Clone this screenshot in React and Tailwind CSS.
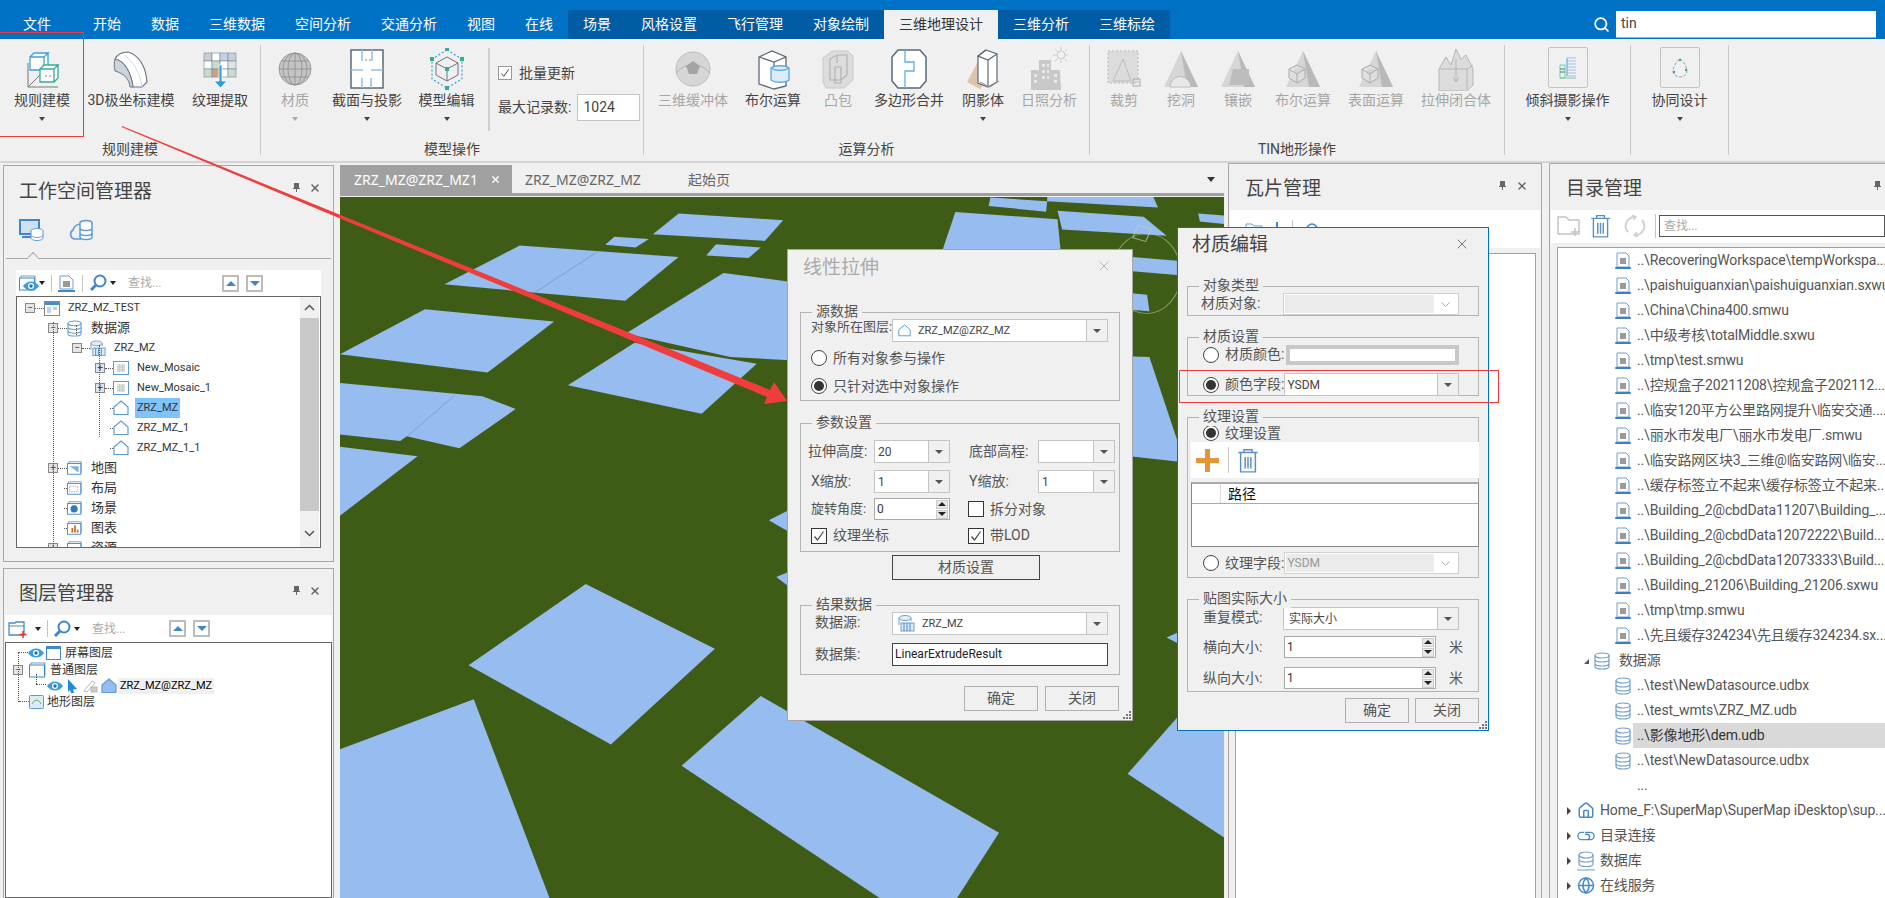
import React from "react";
import { X, Search, Home, Globe } from "lucide-react";

const Caret = ({ className = "", color = "border-t-[#444]" }) => (
  <span className={`inline-block w-0 h-0 border-l-[3px] border-r-[3px] border-t-[4px] border-l-transparent border-r-transparent ${color} ${className}`} />
);

function RuleIcon() {
  return (
    <svg width="36" height="40" viewBox="0 0 36 40" fill="none">
      <path d="M4 14v24h30" stroke="#777" strokeWidth="1" />
      <path d="M4 38l12-12" stroke="#777" strokeWidth="1" />
      <path d="M6 8h14v13H6zM6 8l4-4h14l-4 4M20 8l4-4v13l-4 4" stroke="#3ba0e0" strokeWidth="1.300" fill="#fff" />
      <path d="M16 20h14v13H16zM16 20l4-4h14l-4 4M30 20l4-4v13l-4 4" stroke="#35ad94" strokeWidth="1.300" fill="#fff" />
      <path d="M21 27h2M25 27h2" stroke="#888" />
    </svg>
  );
}
function PolarIcon() {
  return (
    <svg width="36" height="40" viewBox="0 0 36 40">
      <path d="M2 10c3-5 8-7 13-7 2 10-1 14-1 14z" fill="#e8eaee" />
      <path d="M2 10C12 12 18 24 20 38h9l5-5C33 18 26 6 15 3 9 3 4 6 2 10z" fill="#fff" stroke="#6d7784" strokeWidth="1.200" />
      <path d="M2 10c-1 3-1 7 0 12 10 3 14 8 15 16h3C18 24 12 12 2 10z" fill="#ccd3dc" stroke="#6d7784" strokeWidth="1" />
      <path d="M29 38c-2-14-8-24-17-32" fill="none" stroke="#d6dae0" />
    </svg>
  );
}
function TextureIcon() {
  const cells = ["#c9ced4", "#fff", "#bed3ee", "#c9ced4", "#fff", "#c6dccf", "#fff", "#dfe4ea", "#c6dccf", "#c9a584", "#fff", "#c6dccf"];
  return (
    <svg width="34" height="40" viewBox="0 0 34 40">
      {cells.map((c, i) => (
        <rect key={i} x={1 + (i % 4) * 8} y={4 + Math.floor(i / 4) * 8} width="8" height="8" fill={c} stroke="#7a8794" strokeWidth=".6" />
      ))}
      <path d="M16 16h3v16h5l-6.500 7-6.500-7h5z" fill="#2f9de0" stroke="#fff" strokeWidth=".8" />
    </svg>
  );
}
function GlobeIcon() {
  return (
    <svg width="34" height="40" viewBox="0 0 34 40" fill="none" stroke="#8e8e8e" strokeWidth=".8">
      <circle cx="17" cy="20" r="16" fill="#c4c4c4" />
      <ellipse cx="17" cy="20" rx="7" ry="16" />
      <ellipse cx="17" cy="20" rx="12" ry="16" />
      <path d="M1 20h32M3 12h28M3 28h28M17 4v32" />
    </svg>
  );
}
function SectionIcon() {
  return (
    <svg width="34" height="40" viewBox="0 0 34 40">
      <rect x="1" y="1" width="32" height="38" fill="#fff" stroke="#5c6a78" strokeWidth="1.500" />
      <path d="M12 1v11M22 1v11M1 21h12M21 21h12M12 29v10M21 29v10" stroke="#8fc0ea" strokeWidth="1.500" />
      <path d="M15 11h2M19 11h2" stroke="#888" />
    </svg>
  );
}
function ModelEditIcon() {
  return (
    <svg width="34" height="42" viewBox="0 0 34 42" fill="none">
      <path d="M17 2l15 9v20l-15 9-15-9V11z" stroke="#3f9ddb" strokeWidth="1.200" strokeDasharray="2 2" />
      <path d="M17 9l11 6v12l-11 6-11-6V15zM6 15l11 6 11-6M17 21v12" stroke="#6a7480" strokeWidth="1" />
      <rect x="15" y="19" width="4" height="4" fill="#35ad94" />
      <rect x="15" y="0" width="4" height="3" fill="#35ad94" />
      <rect x="30" y="9" width="4" height="4" fill="#35ad94" />
      <rect x="15" y="38" width="4" height="4" fill="#35ad94" />
      <rect x="0" y="9" width="4" height="4" fill="#35ad94" />
    </svg>
  );
}
function BufferIcon() {
  return (
    <svg width="36" height="40" viewBox="0 0 36 40">
      <circle cx="18" cy="20" r="17" fill="#d6d6d6" stroke="#bdbdbd" />
      <path d="M1 24c6-6 10-8 17-8s11 2 17 8" fill="none" stroke="#b0b0b0" />
      <path d="M18 12l7 5-3 8h-8l-3-8z" fill="#a4a4a4" />
    </svg>
  );
}
function BoolIcon() {
  return (
    <svg width="34" height="42" viewBox="0 0 34 42" fill="none">
      <path d="M3 9l13-6 14 6v29l-12 3-15-5z" fill="#fff" stroke="#5c6a78" strokeWidth="1.300" />
      <path d="M3 9l15 5 12-5M18 14v5" stroke="#5c6a78" strokeWidth="1.300" />
      <path d="M15 20c4-3 14-3 18 0v12c-4 3-14 3-18 0z" fill="#dcecf9" stroke="#58a8e4" strokeWidth="1.300" />
      <path d="M15 20c4 3 14 3 18 0" stroke="#58a8e4" strokeWidth="1.300" />
    </svg>
  );
}
function HullIcon() {
  return (
    <svg width="32" height="40" viewBox="0 0 32 40" fill="none">
      <path d="M10 2h16l5 5v24l-9 8H4l-3-6V9z" fill="#dcdcdc" stroke="#c8c8c8" />
      <path d="M8 10l7-4h10v20l-6 5H8z M13 18h6v16h-6z M15 6v8" stroke="#b2b2b2" strokeWidth="1.200" />
    </svg>
  );
}
function MergeIcon() {
  return (
    <svg width="36" height="42" viewBox="0 0 36 42">
      <path d="M7 2h22l6 7v24l-6 7H7l-6-7V9z" fill="#fff" stroke="#57697c" strokeWidth="1.500" />
      <path d="M14 2v12h9v9h-9v17" fill="none" stroke="#64aee6" strokeWidth="1.300" />
    </svg>
  );
}
function ShadowIcon() {
  return (
    <svg width="34" height="42" viewBox="0 0 34 42" fill="none">
      <path d="M14 10L1 34l13 7 8-8z" fill="#dcc5ab" />
      <path d="M20 2l11 4v28l-9 5-10-4V8z" fill="#fff" stroke="#5c6a78" strokeWidth="1.200" />
      <path d="M20 2l-8 6 10 4 9-6M22 12v26" stroke="#5c6a78" strokeWidth="1.200" />
      <path d="M14 34l10 5 9-6" stroke="#8a929b" />
    </svg>
  );
}
function SunIcon() {
  return (
    <svg width="38" height="46" viewBox="0 0 38 46" fill="none">
      <circle cx="31" cy="9" r="4" stroke="#c8c8c8" />
      <path d="M31 1v3M31 14v3M23 9h3M36 9h2M25 3l2 2M35 13l2 2M25 15l2-2M35 5l2-2" stroke="#c8c8c8" />
      <path d="M1 44V24h8V14h12v10h9l1 20z" fill="#c8c8c8" />
      <path d="M12 18h3v3h-3zM17 18h2v3h-2zM12 24h3v3h-3zM17 24h2v3h-2zM12 30h3v3h-3zM17 30h2v3h-2zM24 28h3v3h-3zM4 28h3v3H4zM4 34h3v3H4zM24 34h3v3h-3z" fill="#e8e8e8" />
    </svg>
  );
}
function ClipIcon() {
  return (
    <svg width="34" height="40" viewBox="0 0 34 40" fill="none">
      <rect x="1" y="2" width="30" height="32" fill="#dcdcdc" stroke="#b8b8b8" strokeDasharray="2 2" />
      <path d="M16 10L6 32h18z" stroke="#bcbcbc" />
      <rect x="26" y="30" width="7" height="7" stroke="#aaa" />
    </svg>
  );
}
function TinIcon({ kind }) {
  return (
    <svg width="36" height="40" viewBox="0 0 36 40" fill="none">
      <path d="M18 2L1 38h34z" fill="#d6d6d6" />
      <path d="M18 2l17 36H24z" fill="#b9b9b9" />
      {kind === "hole" && <path d="M7 38c1-14 19-14 21 0z" fill="#e8e8e8" stroke="#bcbcbc" />}
      {kind === "cube" && <path d="M4 20l8-4 8 4v9l-8 5-8-5zM4 20l8 5 8-5M12 25v9" fill="#dedede" stroke="#ababab" />}
      {kind === "mosaic" && <path d="M13 20h16v16H9z" fill="#bdbdbd" />}
    </svg>
  );
}
function ExtrudeIcon() {
  return (
    <svg width="36" height="44" viewBox="0 0 36 44" fill="none" stroke="#b5b5b5">
      <path d="M1 22l7-12 5 8 5-16 5 10 5-4 7 14v16l-6 6H1z" fill="#dcdcdc" />
      <path d="M1 22h28l6-4M29 22v20M18 12v22M15 30l3 5 3-5" />
    </svg>
  );
}
function ObliqueIcon() {
  return (
    <svg width="18" height="22" viewBox="0 0 18 22" fill="none">
      <path d="M1 8h5v13H1zM1 21h16" stroke="#7fc5ae" />
      <path d="M8 1h9M8 4h9M8 7h9M8 10h9M8 13h9M8 16h9M8 19h9" stroke="#9fc4e6" />
      <path d="M8 1v18" stroke="#5aa1dc" />
      <path d="M1 12h5M1 15h5" stroke="#2a8d6f" />
    </svg>
  );
}
function CoopIcon() {
  return (
    <svg width="18" height="20" viewBox="0 0 18 20" fill="none">
      <path d="M9 1c4 2 7 9 7 12a7 6 0 0 1-14 0C2 10 5 3 9 1z" stroke="#8fa0ae" strokeDasharray="3 1.500" />
      <circle cx="9" cy="2" r="1.200" fill="#35ad94" />
      <circle cx="15" cy="12" r="1.200" fill="#35ad94" />
      <circle cx="3" cy="14" r="1.200" fill="#4a8ac9" />
    </svg>
  );
}

// blue small icons used all over the trees and toolbars
function PolyIcon({ size = 16, fill = "none" }) {
  return (
    <svg width={size} height={size} viewBox="0 0 16 16">
      <path d="M1 14.500V7l7-6 7 6v7.500z" fill={fill} stroke="#5d9bd6" strokeWidth="1.200" />
    </svg>
  );
}
function DsIcon({ size = 16 }) {
  return (
    <svg width={size} height={size + 2} viewBox="0 0 16 18" fill="none" stroke="#6f9fcc" strokeWidth="1.200">
      <ellipse cx="8" cy="3.500" rx="7" ry="2.500" />
      <path d="M1 3.500v11c0 1.500 3 2.500 7 2.500s7-1 7-2.500v-11M1 7.500c0 1.500 3 2.500 7 2.500s7-1 7-2.500M1 11.500c0 1.500 3 2.500 7 2.500s7-1 7-2.500" />
    </svg>
  );
}
function DsetIcon() {
  return (
    <svg width="17" height="17" viewBox="0 0 17 17" fill="none" stroke="#6f9fcc">
      <ellipse cx="7" cy="3" rx="6" ry="2.500" fill="#e5eef7" />
      <path d="M1 3v7M13 3v3" />
      <rect x="3" y="8" width="13" height="8" fill="#dcebf8" />
      <path d="M6 8v8M9 8v8M12 8v8" stroke="#4a8ac9" />
    </svg>
  );
}
function GridIcon() {
  return (
    <svg width="16" height="14" viewBox="0 0 16 14">
      <rect x=".5" y=".5" width="15" height="13" fill="#fff" stroke="#5d9bd6" />
      <rect x="4" y="3" width="8" height="8" fill="#e8e4c8" />
      <path d="M6.500 3v8M9.500 3v8M4 6h8M4 9h8" stroke="#b4cfe8" />
    </svg>
  );
}
function WinIcon({ children }) {
  return (
    <svg width="18" height="16" viewBox="0 0 18 16" fill="none">
      <rect x="2" y="1" width="14" height="12" stroke="#6f9fcc" />
      <rect x=".5" y="3" width="15" height="12" fill="#fff" stroke="#3f87c8" />
      {children}
    </svg>
  );
}
function FileIcon() {
  return (
    <svg width="18" height="18" viewBox="0 0 18 18">
      <path d="M3 1h9l3 3v11H3z" fill="#fff" stroke="#6f9fcc" />
      <rect x="6" y="6" width="6" height="6" fill="#9a9a9a" />
      <rect x="1" y="15" width="16" height="2" rx="1" fill="#3f7fbe" />
    </svg>
  );
}
function Magnifier() {
  return (
    <svg width="18" height="18" viewBox="0 0 18 18" fill="none" stroke="#3f87c8" strokeWidth="2">
      <circle cx="11" cy="7" r="5.500" />
      <path d="M7 11l-5 5" strokeWidth="3" />
    </svg>
  );
}
function EyeIcon() {
  return (
    <svg width="16" height="10" viewBox="0 0 16 10">
      <path d="M0 5c4-6 12-6 16 0-4 6-12 6-16 0z" fill="#3b9be0" />
      <circle cx="8" cy="5" r="3" fill="#fff" />
      <circle cx="8" cy="5" r="1.700" fill="#1f6fb4" />
    </svg>
  );
}
function TrashIcon({ w = 19, h = 22, color = "#5b8fc4" }) {
  return (
    <svg width={w} height={h} viewBox="0 0 19 22" fill="none" stroke={color} strokeWidth="1.300">
      <path d="M1 4h17M6 4V1.500h7V4M3 4v17h13V4M7 8v10M9.500 8v10M12 8v10" />
    </svg>
  );
}
function PinIcon({ className }) {
  return (
    <svg className={className} width="7" height="9" viewBox="0 0 7 9" fill="#666">
      <path d="M1 0h5v5h1v1H4v3H3V6H0V5h1z" />
    </svg>
  );
}
function UpDown() {
  return (
    <>
      <span className="flex items-center justify-center w-[17px] h-[17px] border-2 border-[#bcbcbc]">
        <span className="w-0 h-0 border-l-[5px] border-r-[5px] border-b-[5px] border-l-transparent border-r-transparent border-b-[#3f87c8]" />
      </span>
      <span className="flex items-center justify-center w-[17px] h-[17px] border-2 border-[#bcbcbc] ml-[7px]">
        <span className="w-0 h-0 border-l-[5px] border-r-[5px] border-t-[5px] border-l-transparent border-r-transparent border-t-[#3f87c8]" />
      </span>
    </>
  );
}

function TopBar() {
  const tab = "flex items-center justify-center h-[29px] px-[15px] text-[14px] text-white";
  return (
    <div className="flex items-end justify-between h-[39px] bg-[#0072c6]">
      <div className="flex">
        <div className="flex items-center h-[29px] w-[78px] pl-[23px] text-[14px] text-white">文件</div>
        {["开始", "数据", "三维数据", "空间分析", "交通分析", "视图", "在线"].map((t) => (
          <div key={t} className={tab}>{t}</div>
        ))}
        <div className="flex bg-[#005ca3]">
          {["场景", "风格设置", "飞行管理", "对象绘制"].map((t) => (
            <div key={t} className={tab}>{t}</div>
          ))}
          <div className="flex items-center justify-center h-[29px] px-[15px] text-[14px] text-[#333] bg-[#f0f0f0]">三维地理设计</div>
          {["三维分析", "三维标绘"].map((t) => (
            <div key={t} className={tab}>{t}</div>
          ))}
        </div>
      </div>
      <div className="flex items-center mb-[1px] mr-[9px]">
        <Search size={17} color="#fff" strokeWidth={2.500} className="mr-[6px]" />
        <div className="w-[260px] h-[27px] bg-white border-b border-[#aaa] pl-[5px] text-[14px] leading-[25px] text-[#444]">tin</div>
      </div>
    </div>
  );
}

function Tool({ w, icon, label, caret, off }) {
  return (
    <div className="flex flex-col items-center shrink-0" style={{ width: w }}>
      <div className="flex items-center justify-center h-[42px]">{icon}</div>
      <div className={`h-[20px] leading-[20px] text-[14px] whitespace-nowrap ${off ? "text-[#a6a6a6]" : "text-[#444]"}`}>{label}</div>
      {caret && <Caret className="mt-[7px]" color={off ? "border-t-[#aaa]" : "border-t-[#444]"} />}
    </div>
  );
}
function BoxTool({ w, icon, label }) {
  return (
    <div className="flex flex-col items-center shrink-0" style={{ width: w }}>
      <div className="flex items-center justify-center w-[40px] h-[41px] mt-[-1px] mb-[2px] border border-[#c4c4c4] rounded-[2px]">{icon}</div>
      <div className="h-[20px] leading-[20px] text-[14px] whitespace-nowrap text-[#444]">{label}</div>
      <Caret className="mt-[7px]" />
    </div>
  );
}
function RibbonGroup({ width, label, children }) {
  return (
    <div className="flex flex-col h-[110px] my-[6px] pt-[3px] border-r border-[#c8c8c8] shrink-0" style={{ width }}>
      <div className="flex flex-1">{children}</div>
      <div className="h-[20px] leading-[20px] text-center text-[14px] text-[#444] mb-[-4px]">{label}</div>
    </div>
  );
}

function Ribbon() {
  return (
    <div className="flex h-[124px] bg-[#f0f0f0] border-b-2 border-[#d4d4d4]">
      <RibbonGroup width={261} label="规则建模">
        <Tool w={84} icon={<RuleIcon />} label="规则建模" caret />
        <Tool w={94} icon={<PolarIcon />} label="3D极坐标建模" />
        <Tool w={84} icon={<TextureIcon />} label="纹理提取" />
      </RibbonGroup>
      <RibbonGroup width={383} label="模型操作">
        <Tool w={68} icon={<GlobeIcon />} label="材质" caret off />
        <Tool w={76} icon={<SectionIcon />} label="截面与投影" caret />
        <Tool w={83} icon={<ModelEditIcon />} label="模型编辑" caret />
        <div className="w-[155px] h-[83px] border-l-2 border-[#d0d0d0] pl-[8px] pt-[15px] text-[14px] text-[#444]">
          <div className="flex items-center h-[20px] gap-[7px]">
            <Check checked size={14} light />
            <span>批量更新</span>
          </div>
          <div className="flex items-center mt-[11px] w-[146px]">
            <span className="whitespace-nowrap">最大记录数:</span>
            <div className="w-[63px] h-[27px] ml-[6px] bg-white border border-[#c4c4c4] pl-[5px] leading-[25px]">1024</div>
          </div>
        </div>
      </RibbonGroup>
      <RibbonGroup width={446} label="运算分析">
        <Tool w={98} icon={<BufferIcon />} label="三维缓冲体" off />
        <Tool w={62} icon={<BoolIcon />} label="布尔运算" />
        <Tool w={68} icon={<HullIcon />} label="凸包" off />
        <Tool w={74} icon={<MergeIcon />} label="多边形合并" />
        <Tool w={74} icon={<ShadowIcon />} label="阴影体" caret />
        <Tool w={58} icon={<SunIcon />} label="日照分析" off />
      </RibbonGroup>
      <RibbonGroup width={415} label="TIN地形操作">
        <Tool w={68} icon={<ClipIcon />} label="裁剪" off />
        <Tool w={46} icon={<TinIcon kind="hole" />} label="挖洞" off />
        <Tool w={68} icon={<TinIcon kind="mosaic" />} label="镶嵌" off />
        <Tool w={62} icon={<TinIcon kind="cube" />} label="布尔运算" off />
        <Tool w={84} icon={<TinIcon kind="cube" />} label="表面运算" off />
        <Tool w={76} icon={<ExtrudeIcon />} label="拉伸闭合体" off />
      </RibbonGroup>
      <RibbonGroup width={126} label="">
        <BoxTool w={125} icon={<ObliqueIcon />} label="倾斜摄影操作" />
      </RibbonGroup>
      <RibbonGroup width={98} label="">
        <BoxTool w={97} icon={<CoopIcon />} label="协同设计" />
      </RibbonGroup>
    </div>
  );
}

function PanelHead({ title, h = "h-[44px] pt-[8px]" }) {
  return (
    <div className={`relative flex items-center ${h} pl-[14px] shrink-0`}>
      <span className="text-[19px] text-[#444] whitespace-nowrap">{title}</span>
      <PinIcon className="absolute left-[288px] top-[17px]" />
      <X size={12} className="absolute left-[304px] top-[16px]" color="#666" strokeWidth={3} />
    </div>
  );
}
function Box({ sign }) {
  return (
    <span className="flex items-center justify-center w-[10px] h-[10px] bg-[#e4e4e4] border border-[#888] text-[#1f4e8c] text-[10px] leading-none shrink-0">
      {sign}
    </span>
  );
}
function Dots({ w }) {
  return <span className="border-t border-dotted border-[#555] shrink-0" style={{ width: w }} />;
}

function WsRow({ left, box, icon, text, cjk, selected, dot = 9 }) {
  return (
    <div className="flex items-center h-[20px]" style={{ paddingLeft: left }}>
      {box ? <Box sign={box} /> : <span className="w-[10px] shrink-0" />}
      <Dots w={dot} />
      <span className="flex items-center w-[16px] shrink-0">{icon}</span>
      <span className={`ml-[6px] px-[2px] h-[20px] leading-[20px] text-[#333] whitespace-nowrap ${cjk ? "text-[13px]" : "text-[11px]"} ${selected ? "bg-[#7ec4fa]" : ""}`}>{text}</span>
    </div>
  );
}

function WorkspacePanel() {
  return (
    <div className="flex flex-col h-[397px] border border-[#a8a8a8] px-[1px]">
      <PanelHead title="工作空间管理器" />
      <div className="relative flex items-center gap-[24px] h-[49px] mx-[1px] pl-[13px] pb-[8px] border-b border-[#a8a8a8]">
        <svg width="25" height="22" viewBox="0 0 25 22" fill="none">
          <rect x="1" y="1" width="19" height="14" fill="#cfe2f4" stroke="#3f87c8" strokeWidth="2" />
          <path d="M3 18h12" stroke="#3f87c8" strokeWidth="2" />
          <ellipse cx="18" cy="12" rx="6" ry="2.500" fill="#fff" stroke="#5d9bd6" />
          <path d="M12 12v7c0 1.500 3 2.500 6 2.500s6-1 6-2.500v-7M12 16c0 1.500 3 2.500 6 2.500s6-1 6-2.500" fill="#fff" stroke="#5d9bd6" />
        </svg>
        <svg width="25" height="22" viewBox="0 0 25 22" fill="none" stroke="#5d9bd6" strokeWidth="1.500">
          <path d="M6 20a5 5 0 0 1-1-9c1-4 5-6 9-6M13 20H6" />
          <ellipse cx="18" cy="4" rx="6" ry="2.500" />
          <path d="M12 4v14c0 1.500 3 2.500 6 2.500s6-1 6-2.500V4M12 9c0 1.500 3 2.500 6 2.500s6-1 6-2.500M12 14c0 1.500 3 2.500 6 2.500s6-1 6-2.500" fill="#fff" />
        </svg>
        <span className="absolute left-[22px] bottom-[-1px] w-[10px] h-[7px] overflow-hidden">
          <span className="block w-[10px] h-[10px] mt-[2px] rotate-45 bg-[#f0f0f0] border-l border-t border-[#a8a8a8]" />
        </span>
      </div>
      <div className="flex items-center h-[26px] mt-[11px] mx-[11px] bg-white pl-[3px]">
        <span className="relative w-[26px] flex">
          <WinIcon />
          <span className="absolute left-[4px] top-[6px]"><EyeIcon /></span>
        </span>
        <Caret className="ml-[-6px]" color="border-t-[#222]" />
        <span className="w-px h-[17px] bg-[#c4c4c4] ml-[6px]" />
        <span className="ml-[6px]">
          <svg width="17" height="17" viewBox="0 0 17 17"><path d="M2 1h9l4 4v9H2z" fill="#fff" stroke="#6f9fcc" /><rect x="5" y="6" width="7" height="6" fill="#999" /><rect x="0" y="15" width="17" height="2" fill="#3f87c8" /></svg>
        </span>
        <span className="w-px h-[17px] bg-[#c4c4c4] ml-[7px]" />
        <span className="ml-[6px] flex"><Magnifier /></span>
        <Caret className="ml-[3px]" color="border-t-[#222]" />
        <span className="ml-[12px] w-[94px] text-[12px] text-[#aaa]">查找...</span>
        <UpDown />
      </div>
      <div className="relative flex h-[252px] mx-[11px] bg-white border border-[#666] overflow-hidden">
        <div className="relative flex-1 pt-[1px] overflow-hidden">
          <span className="absolute left-[36px] top-[25px] h-[230px] border-l border-dotted border-[#555]" />
          <span className="absolute left-[59px] top-[28px] h-[10px] border-l border-dotted border-[#555]" />
          <span className="absolute left-[82px] top-[48px] h-[92px] border-l border-dotted border-[#555]" />
          <WsRow left={8} box="−" icon={<svg width="16" height="15" viewBox="0 0 16 15"><rect x=".5" y=".5" width="15" height="14" fill="#fff" stroke="#888" /><rect x="1" y="1" width="14" height="3" fill="#4a8ac9" /><rect x="3" y="6" width="4" height="6" fill="#bcd3e8" /><rect x="9" y="6" width="4" height="3" fill="#bcd3e8" /></svg>} text="ZRZ_MZ_TEST" />
          <WsRow left={31} box="−" icon={<DsIcon size={15} />} text="数据源" cjk />
          <WsRow left={55} box="−" dot={8} icon={<DsetIcon />} text="ZRZ_MZ" />
          <WsRow left={78} box="+" dot={8} icon={<GridIcon />} text="New_Mosaic" />
          <WsRow left={78} box="+" dot={8} icon={<GridIcon />} text="New_Mosaic_1" />
          <WsRow left={83} dot={3} icon={<PolyIcon />} text="ZRZ_MZ" selected />
          <WsRow left={83} dot={3} icon={<PolyIcon />} text="ZRZ_MZ_1" />
          <WsRow left={83} dot={3} icon={<PolyIcon />} text="ZRZ_MZ_1_1" />
          <WsRow left={31} box="+" icon={<WinIcon><path d="M3 6l10 7V6z" fill="#7ab0e0" /></WinIcon>} text="地图" cjk />
          <WsRow left={37} dot={3} icon={<WinIcon><rect x="3" y="6" width="9" height="6" stroke="#999" strokeDasharray="1 1" /></WinIcon>} text="布局" cjk />
          <WsRow left={37} dot={3} icon={<WinIcon><circle cx="8" cy="9" r="4" fill="#2b78c2" /></WinIcon>} text="场景" cjk />
          <WsRow left={37} dot={3} icon={<WinIcon><path d="M5 13V8h2v5zM8 13V5h2v8zM11 13v-3h2v3z" fill="#c8722c" /></WinIcon>} text="图表" cjk />
          <WsRow left={31} box="+" icon={<WinIcon />} text="资源" cjk />
        </div>
        <div className="flex flex-col items-center w-[19px] bg-[#f0f0f0] mr-[1px] text-[#444]">
          <svg className="mt-[7px]" width="11" height="7" viewBox="0 0 11 7" fill="none" stroke="#555" strokeWidth="1.500"><path d="M1 6l4.500-4.500L10 6" /></svg>
          <div className="w-full h-[193px] mt-[7px] bg-[#c8c8c8]" />
          <svg className="mt-[19px]" width="11" height="7" viewBox="0 0 11 7" fill="none" stroke="#555" strokeWidth="1.500"><path d="M1 1l4.500 4.500L10 1" /></svg>
        </div>
      </div>
    </div>
  );
}

function LayerPanel() {
  return (
    <div className="flex flex-col flex-1 border border-b-0 border-[#a8a8a8] px-[1px] overflow-hidden">
      <PanelHead title="图层管理器" h="h-[46px] pt-[5px]" />
      <div className="flex items-center h-[27px] bg-white pl-[3px]">
        <svg width="20" height="18" viewBox="0 0 20 18" fill="none">
          <path d="M1 15V3h6l1-1h8v13z" fill="#fff" stroke="#4a8ac9" strokeWidth="1.300" />
          <path d="M1 6h15" stroke="#4a8ac9" />
          <path d="M15 11v7M11.500 14.500h7" stroke="#e0352b" strokeWidth="1.500" />
        </svg>
        <Caret className="ml-[7px]" color="border-t-[#222]" />
        <span className="w-px h-[17px] bg-[#c4c4c4] ml-[6px]" />
        <span className="ml-[5px] flex"><Magnifier /></span>
        <Caret className="ml-[3px]" color="border-t-[#222]" />
        <span className="ml-[12px] w-[77px] text-[12px] text-[#aaa]">查找...</span>
        <UpDown />
      </div>
      <div className="relative flex-1 bg-white border border-[#666] text-[12px] text-[#333]">
        <span className="absolute left-[12px] top-[9px] h-[50px] border-l border-dotted border-[#555]" />
        <div className="flex items-center h-[17px] mt-[1px] pl-[13px]">
          <Dots w={9} />
          <EyeIcon />
          <span className="ml-[2px] flex"><svg width="15" height="14" viewBox="0 0 15 14"><rect x=".5" y=".5" width="14" height="13" fill="#fff" stroke="#3f87c8" /><rect x="1" y="1" width="13" height="2" fill="#3f87c8" /></svg></span>
          <span className="ml-[4px]">屏幕图层</span>
        </div>
        <div className="flex items-center h-[17px] pl-[7px]">
          <Box sign="−" />
          <span className="ml-[6px] flex"><WinIcon /></span>
          <span className="ml-[3px]">普通图层</span>
        </div>
        <div className="relative flex items-center h-[15px] pl-[41px]">
          <span className="absolute left-[30px] top-[-4px] h-[10px] border-l border-dotted border-[#555]" />
          <span className="absolute left-[30px] top-[6px] w-[10px] border-t border-dotted border-[#555]" />
          <EyeIcon />
          <svg className="ml-[3px]" width="13" height="14" viewBox="0 0 13 14"><path d="M2 0l9 10-4 .5 1 3.500-3 0-1-3-2 2z" fill="#1f8ade" /></svg>
          <svg className="ml-[4px]" width="15" height="14" viewBox="0 0 15 14" fill="none" stroke="#b8b8b8"><path d="M1 12L9 2l3 2-8 9z" /><rect x="8" y="8" width="6" height="5" fill="#c8c8c8" /></svg>
          <span className="ml-[3px] flex"><PolyIcon size={16} fill="#97bcf0" /></span>
          <span className="ml-[1px] px-[2px] bg-[#f0f0f0] text-black text-[11px] leading-[16px]">ZRZ_MZ@ZRZ_MZ</span>
        </div>
        <div className="flex items-center h-[17px] pl-[13px]">
          <Dots w={10} />
          <span className="flex"><svg width="15" height="14" viewBox="0 0 15 14"><rect x=".5" y=".5" width="14" height="13" rx="1" fill="#dcebf8" stroke="#5d9bd6" /><path d="M3 9c2-5 7-5 9 0" fill="none" stroke="#6da85c" /></svg></span>
          <span className="ml-[3px]">地形图层</span>
        </div>
      </div>
    </div>
  );
}

function SceneMap() {
  const blocks = [
    "590,118 772,132 740,176 545,162",
    "478,167 538,172 515,190 462,184",
    "655,183 733,190 712,212 638,207",
    "313,186 590,210 497,303 182,268",
    "148,321 373,347 257,455 0,416",
    "668,244 800,265 800,430 680,422 498,372",
    "513,392 726,436 630,542 397,482",
    "0,477 248,505 306,532 208,615 116,590 105,600 0,586",
    "0,612 135,632 0,758",
    "428,903 653,1040 472,1243 224,1075",
    "233,1147 365,1568 0,1568 0,1253",
    "733,1140 1148,1430 1075,1568 940,1568 595,1288",
    "1072,115 1250,130 1258,230 1040,230",
    "1133,84 1232,92 1230,114 1130,102",
    "1232,83 1417,83 1425,105 1232,92",
    "1250,112 1400,125 1440,165 1258,152",
    "1360,208 1458,218 1458,248 1360,238",
    "1360,285 1406,290 1410,325 1360,320",
    "1360,420 1410,422 1470,640 1470,645 1360,630",
    "800,735 747,768 800,805",
    "800,868 760,888 800,925",
    "1470,1000 1440,1016 1470,1035",
    "1470,1170 1372,1305 1540,1440 1540,1170",
    "1495,118 1540,122 1540,140 1498,135",
  ];
  return (
    <svg className="block w-full h-full" viewBox="0 83 1540 1485" preserveAspectRatio="none">
      <rect x="0" y="83" width="1540" height="1485" fill="#3f5c17" />
      {blocks.map((p) => (
        <polygon key={p} points={p} fill="#97bcf0" />
      ))}
      <path d="M450 198L340 285M200 503L115 592" stroke="#6f8aa8" strokeWidth="1" />
      <ellipse cx="1405" cy="245" rx="60" ry="85" fill="none" stroke="#b9c6a6" strokeOpacity=".6" strokeWidth="2" />
      <rect x="1385" y="146" width="24" height="28" fill="none" stroke="#c8d2b8" strokeOpacity=".7" strokeWidth="2" transform="rotate(20 1397 160)" />
    </svg>
  );
}

function CenterPanel() {
  return (
    <div className="flex flex-col w-[884px] mr-[4px] shrink-0 mt-[2px]">
      <div className="flex items-center h-[28px] border-b-[3px] border-[#a0a0a0] box-content text-[14px] font-['Noto_Sans','Noto_Sans_CJK_SC',sans-serif]">
        <div className="flex items-center w-[172px] h-[28px] bg-[#a0a0a0] pl-[14px] text-white whitespace-nowrap">
          ZRZ_MZ@ZRZ_MZ1
          <X size={11} strokeWidth={3} className="ml-[12px]" />
        </div>
        <span className="ml-[13px] text-[#666] whitespace-nowrap">ZRZ_MZ@ZRZ_MZ</span>
        <span className="ml-[47px] text-[#666]">起始页</span>
        <Caret className="ml-auto mr-[9px] border-l-[4px] border-r-[4px] border-t-[5px]" color="border-t-[#333]" />
      </div>
      <div className="flex-1 min-h-0 mt-[1px]">
        <SceneMap />
      </div>
    </div>
  );
}

function TilePanel() {
  return (
    <div className="flex flex-col w-[314px] mr-[7px] shrink-0 border border-b-0 border-[#a8a8a8] px-[1px]">
      <div className="relative flex items-center h-[46px] pl-[15px] pt-[5px]">
        <span className="text-[19px] text-[#444]">瓦片管理</span>
        <PinIcon className="absolute left-[269px] top-[17px]" />
        <X size={12} className="absolute left-[286px] top-[16px]" color="#666" strokeWidth={3} />
      </div>
      <div className="flex items-center h-[38px] bg-white pl-[15px] gap-[10px]">
        <svg width="18" height="14" viewBox="0 0 18 14" fill="none" stroke="#6f9fcc"><path d="M1 13V2h6l2 2h8v9z" /></svg>
        <span className="w-[2px] h-[14px] bg-[#3f87c8] ml-[3px]" />
        <span className="w-px h-[18px] bg-[#c4c4c4] ml-[4px]" />
        <svg width="16" height="14" viewBox="0 0 16 14" fill="none" stroke="#3f87c8" strokeWidth="1.500"><circle cx="9" cy="7" r="5" /></svg>
      </div>
      <div className="flex-1 bg-white mt-[5px] ml-[5px] mr-[4px] border border-[#a0a0a0] border-b-0" />
    </div>
  );
}

function DirRow({ left, icon, text, selected, iconGap = 5, arrow }) {
  return (
    <div className="flex items-center h-[25px] whitespace-nowrap" style={{ paddingLeft: left }}>
      {arrow && <span className={`w-0 h-0 ${arrow === "open" ? "mr-[4px] border-l-[5px] border-b-[5px] border-l-transparent border-b-[#555] mt-[2px]" : "mr-[6px] border-t-[4px] border-b-[4px] border-l-[4px] border-t-transparent border-b-transparent border-l-[#444] ml-[1px]"}`} />}
      <span className="flex items-center justify-center w-[18px] shrink-0">{icon}</span>
      <span className={`flex-1 h-[25px] leading-[25px] ${selected ? "bg-[#d9d9d9] text-[#333]" : ""}`} style={{ paddingLeft: selected ? 4 : 0, marginLeft: selected ? iconGap - 4 : iconGap }}>{text}</span>
    </div>
  );
}

const FILES = [
  "..\\RecoveringWorkspace\\tempWorkspa...",
  "..\\paishuiguanxian\\paishuiguanxian.sxwu",
  "..\\China\\China400.smwu",
  "..\\中级考核\\totalMiddle.sxwu",
  "..\\tmp\\test.smwu",
  "..\\控规盒子20211208\\控规盒子202112...",
  "..\\临安120平方公里路网提升\\临安交通....",
  "..\\丽水市发电厂\\丽水市发电厂.smwu",
  "..\\临安路网区块3_三维@临安路网\\临安...",
  "..\\缓存标签立不起来\\缓存标签立不起来...",
  "..\\Building_2@cbdData11207\\Building_...",
  "..\\Building_2@cbdData12072222\\Build...",
  "..\\Building_2@cbdData12073333\\Build...",
  "..\\Building_21206\\Building_21206.sxwu",
  "..\\tmp\\tmp.smwu",
  "..\\先且缓存324234\\先且缓存324234.sx...",
];

function DirectoryPanel() {
  return (
    <div className="flex flex-col flex-1 min-w-0 border-l border-t border-[#a8a8a8] pl-[1px] overflow-hidden">
      <div className="relative flex items-center h-[46px] pl-[15px] pt-[5px]">
        <span className="text-[19px] text-[#444]">目录管理</span>
        <PinIcon className="absolute left-[323px] top-[17px]" />
      </div>
      <div className="flex items-center h-[33px] bg-white pl-[6px] pb-[1px]">
        <svg width="24" height="22" viewBox="0 0 24 22" fill="none" stroke="#c4c4c4" strokeWidth="1.500"><path d="M1 19V2h8l3 3h10v14z" /><path d="M18 13v8M14 17h8" /></svg>
        <span className="ml-[8px] flex"><TrashIcon w={23} h={24} /></span>
        <svg className="ml-[12px]" width="22" height="22" viewBox="0 0 22 22" fill="none" stroke="#d0d0d0" strokeWidth="2"><path d="M4 17A9 9 0 0 1 11 2M18 5a9 9 0 0 1-7 15" /><path d="M8 0l4 2-3 3M14 22l-4-2 3-3" strokeWidth="1.500" /></svg>
        <span className="w-px h-[24px] bg-[#c4c4c4] ml-[9px]" />
        <div className="flex-1 h-[22px] ml-[3px] border border-[#555] pl-[4px] text-[12px] leading-[20px] text-[#aaa]">查找...</div>
      </div>
      <div className="flex-1 mt-[4px] ml-[6px] bg-white border-l border-t border-[#a0a0a0] text-[14px] tracking-[-0.15px] text-[#555] overflow-hidden">
        {FILES.map((f) => (
          <DirRow key={f} left={56} icon={<FileIcon />} text={f} />
        ))}
        <DirRow left={26} arrow="open" icon={<DsIcon />} iconGap={8} text="数据源" />
        <DirRow left={56} icon={<DsIcon />} text="..\test\NewDatasource.udbx" />
        <DirRow left={56} icon={<DsIcon />} text="..\test_wmts\ZRZ_MZ.udb" />
        <DirRow left={56} icon={<DsIcon />} text="..\影像地形\dem.udb" selected />
        <DirRow left={56} icon={<DsIcon />} text="..\test\NewDatasource.udbx" />
        <DirRow left={56} icon={<span />} text="..." />
        <DirRow left={8} arrow="closed" icon={<Home size={19} color="#4a8ac9" />} text="Home_F:\SuperMap\SuperMap iDesktop\sup..." />
        <DirRow left={8} arrow="closed" icon={<svg width="20" height="16" viewBox="0 0 20 16" fill="none" stroke="#4a8ac9" strokeWidth="1.500"><path d="M8 4H5a4 4 0 0 0 0 8h6a3 3 0 0 0 0-6H9M12 12h3a4 4 0 0 0 0-8H9" /></svg>} text="目录连接" />
        <DirRow left={8} arrow="closed" icon={<svg width="18" height="20" viewBox="0 0 18 20" fill="none" stroke="#6f9fcc" strokeWidth="1.200"><ellipse cx="9" cy="4" rx="7" ry="3" /><path d="M2 4v9c0 1.500 3 2.500 7 2.500s7-1 7-2.500V4M2 8.500c0 1.500 3 2.500 7 2.500s7-1 7-2.500M0 19h18" /></svg>} text="数据库" />
        <DirRow left={8} arrow="closed" icon={<Globe size={19} color="#4a8ac9" />} text="在线服务" />
      </div>
    </div>
  );
}

function Radio({ on }) {
  return (
    <span className="flex items-center justify-center w-[16px] h-[16px] rounded-full bg-white border border-[#444] shrink-0">
      {on && <span className="w-[10px] h-[10px] rounded-full bg-[#333]" />}
    </span>
  );
}
function Check({ checked, size = 16, light }) {
  return (
    <span className={`flex items-center justify-center bg-white border shrink-0 ${light ? "border-[#999]" : "border-[#333]"}`} style={{ width: size, height: size }}>
      {checked && (
        <svg width={size - 4} height={size - 4} viewBox="0 0 12 12" fill="none" stroke="#444" strokeWidth="1.200"><path d="M1.500 6.500L4.500 10 10.500 1.500" /></svg>
      )}
    </span>
  );
}
function DropBtn({ w = 21 }) {
  return (
    <span className="flex items-center justify-center h-full border-l border-[#c4c4c4] bg-[#f0f0f0] shrink-0" style={{ width: w }}>
      <Caret className="border-l-[4px] border-r-[4px] border-t-[4px]" color="border-t-[#555]" />
    </span>
  );
}
function Combo({ className, icon, text, pl = 3, btn = 21 }) {
  return (
    <div className={`flex items-center h-[23px] bg-white border border-[#c4c4c4] text-[12px] text-[#444] ${className}`}>
      {icon && <span className="ml-[5px] mr-[7px] flex">{icon}</span>}
      <span className="flex-1 truncate" style={{ paddingLeft: pl }}>{text}</span>
      <DropBtn w={btn} />
    </div>
  );
}
function DisabledCombo({ text }) {
  return (
    <div className="flex items-center w-[176px] h-[22px] ml-auto bg-white border border-[#d0d0d0] p-[1px] text-[12px] text-[#999]">
      <span className="flex-1 h-full bg-[#ebebeb] pl-[1px] leading-[18px]">{text}</span>
      <svg className="mx-[7px]" width="9" height="5" viewBox="0 0 9 5" fill="none" stroke="#aaa"><path d="M.5.5l4 4 4-4" /></svg>
    </div>
  );
}
function Spin({ className, text }) {
  return (
    <div className={`flex items-center h-[22px] bg-white border border-[#aaa] text-[12px] text-[#333] ${className}`}>
      <span className="flex-1 pl-[2px]">{text}</span>
      <span className="flex flex-col w-[12px] mr-[1px] gap-[1px]">
        <span className="flex items-center justify-center h-[9px] bg-[#e8e8e8] border border-[#ccc]">
          <span className="w-0 h-0 border-l-[4px] border-r-[4px] border-b-[4px] border-l-transparent border-r-transparent border-b-[#222]" />
        </span>
        <span className="flex items-center justify-center h-[9px] bg-[#e8e8e8] border border-[#ccc]">
          <span className="w-0 h-0 border-l-[4px] border-r-[4px] border-t-[4px] border-l-transparent border-r-transparent border-t-[#222]" />
        </span>
      </span>
    </div>
  );
}
function Group({ legend, className = "", children }) {
  return (
    <div className={`relative border border-[#b4b4b4] ${className}`}>
      <span className="absolute -top-[12px] left-[11px] px-[4px] bg-[#f0f0f0] text-[14px] leading-[20px] text-[#555] whitespace-nowrap">{legend}</span>
      {children}
    </div>
  );
}
function Btn({ w, children, dark }) {
  return (
    <div className={`flex items-center justify-center h-[25px] text-[14px] text-[#555] border ${dark ? "border-[#444]" : "border-[#b0b0b0]"}`} style={{ width: w }}>
      {children}
    </div>
  );
}
function Grip() {
  return (
    <svg className="absolute right-0 bottom-0" width="10" height="10" viewBox="0 0 10 10" fill="#777">
      <rect x="7" y="1" width="2" height="2" /><rect x="4" y="4" width="2" height="2" /><rect x="7" y="4" width="2" height="2" />
      <rect x="1" y="7" width="2" height="2" /><rect x="4" y="7" width="2" height="2" /><rect x="7" y="7" width="2" height="2" />
    </svg>
  );
}

function ExtrudeDialog() {
  const label = "text-[14px] text-[#555] whitespace-nowrap";
  return (
    <div className="absolute left-[787px] top-[249px] w-[346px] h-[472px] bg-[#f0f0f0] border border-[#a6a6a6] px-[12px]">
      <div className="relative h-[62px] pl-[3px] pt-[4px] text-[19px] text-[#aaa]">
        线性拉伸
        <X size={16} strokeWidth={1} color="#999" className="absolute right-[8px] top-[8px]" />
      </div>
      <Group legend="源数据" className="h-[89px]">
        <div className="flex pt-[6px] pl-[10px]">
          <span className="w-[81px] -mt-[2px] text-[13px] text-[#555] whitespace-nowrap">对象所在图层:</span>
          <Combo className="w-[216px]" icon={<PolyIcon size={13} />} text={<span className="text-[11px]">ZRZ_MZ@ZRZ_MZ</span>} pl={0} />
        </div>
        <div className="flex items-center h-[28px] mt-[2px] pl-[10px] gap-[6px]">
          <Radio />
          <span className={label}>所有对象参与操作</span>
        </div>
        <div className="flex items-center h-[28px] pl-[10px] gap-[6px]">
          <Radio on />
          <span className={label}>只针对选中对象操作</span>
        </div>
      </Group>
      <Group legend="参数设置" className="h-[129px] mt-[22px]">
        <div className="flex items-center mt-[16px] pl-[7px]">
          <span className={`${label} w-[66px]`}>拉伸高度:</span>
          <Combo className="w-[76px]" text="20" />
          <span className={`${label} w-[69px] ml-[19px]`}>底部高程:</span>
          <Combo className="w-[77px]" text="" />
        </div>
        <div className="flex items-center mt-[7px] pl-[7px]">
          <span className={`${label} w-[66px] pl-[3px]`}>X缩放:</span>
          <Combo className="w-[76px]" text="1" />
          <span className={`${label} w-[69px] ml-[19px]`}>Y缩放:</span>
          <Combo className="w-[77px]" text="1" />
        </div>
        <div className="flex items-center mt-[5px] pl-[7px]">
          <span className="w-[66px] pl-[3px] text-[13px] text-[#555] whitespace-nowrap">旋转角度:</span>
          <Spin className="w-[76px]" text="0" />
          <span className="flex items-center ml-[18px] gap-[6px]">
            <Check />
            <span className={label}>拆分对象</span>
          </span>
        </div>
        <div className="flex items-center mt-[5px] pl-[10px]">
          <span className="flex items-center w-[157px] gap-[6px]">
            <Check checked />
            <span className={label}>纹理坐标</span>
          </span>
          <span className="flex items-center gap-[6px]">
            <Check checked />
            <span className={label}>带LOD</span>
          </span>
        </div>
      </Group>
      <div className="mt-[3px] ml-[92px]">
        <Btn w={148} dark>材质设置</Btn>
      </div>
      <Group legend="结果数据" className="h-[70px] mt-[25px]">
        <div className="flex items-center pt-[6px] pl-[14px]">
          <span className={`${label} w-[77px] -mt-[3px]`}>数据源:</span>
          <Combo className="w-[216px]" icon={<DsetIcon />} text={<span className="text-[11px]">ZRZ_MZ</span>} pl={0} />
        </div>
        <div className="flex items-center mt-[8px] pl-[14px]">
          <span className={`${label} w-[77px]`}>数据集:</span>
          <div className="w-[216px] h-[23px] bg-white border border-[#444] pl-[2px] text-[12px] leading-[21px] text-[#222]">LinearExtrudeResult</div>
        </div>
      </Group>
      <div className="flex justify-end gap-[7px] mt-[11px] pr-[1px]">
        <Btn w={74}>确定</Btn>
        <Btn w={74}>关闭</Btn>
      </div>
      <Grip />
    </div>
  );
}

function MaterialDialog() {
  const label = "text-[14px] text-[#555] whitespace-nowrap";
  return (
    <div className="absolute left-[1177px] top-[227px] w-[312px] h-[504px] bg-[#f0f0f0] border border-[#0072c6] px-[9px]">
      <div className="relative h-[58px] pl-[5px] pt-[3px] text-[19px] text-[#444]">
        材质编辑
        <X size={16} strokeWidth={1} color="#333" className="absolute right-[9px] top-[8px]" />
      </div>
      <Group legend="对象类型" className="h-[30px]">
        <div className="flex items-center pt-[6px] pl-[13px] pr-[19px]">
          <span className={`${label} -mt-[2px]`}>材质对象:</span>
          <DisabledCombo text="" />
        </div>
      </Group>
      <Group legend="材质设置" className="h-[59px] mt-[21px]">
        <div className="flex items-center pt-[6px] pl-[15px] pr-[19px]">
          <Radio />
          <span className={`${label} ml-[6px]`}>材质颜色:</span>
          <div className="w-[173px] h-[20px] ml-auto border-[4px] border-[#c8c8c8] bg-white" />
        </div>
        <div className="flex items-center mt-[8px] pl-[15px] pr-[19px]">
          <Radio on />
          <span className={`${label} ml-[6px]`}>颜色字段:</span>
          <Combo className="w-[176px] h-[22px] ml-auto" text="YSDM" pl={2} />
        </div>
      </Group>
      <Group legend="纹理设置" className="h-[161px] mt-[21px]">
        <div className="flex items-center h-[20px] mt-[5px] pl-[15px]">
          <Radio on />
          <span className={`${label} ml-[6px]`}>纹理设置</span>
        </div>
        <div className="flex items-center h-[36px] -mt-[1px] ml-[3px] w-[288px] bg-white pl-[5px]">
          <svg width="23" height="23" viewBox="0 0 23 23"><path d="M9 0h5v9h9v5h-9v9H9v-9H0V9h9z" fill="#e59438" /></svg>
          <span className="w-px h-[26px] bg-[#c8c8c8] ml-[9px]" />
          <span className="ml-[8px] flex"><TrashIcon w={22} h={25} /></span>
        </div>
        <div className="w-[288px] h-[65px] mt-[4px] ml-[3px] bg-white border border-[#888] border-t-2 border-t-[#aaa]">
          <div className="flex h-[20px] border-b border-[#aaa]">
            <span className="w-[29px] border-r border-[#ddd]" />
            <span className="pl-[7px] text-[14px] leading-[20px] text-[#111]">路径</span>
          </div>
        </div>
        <div className="flex items-center mt-[5px] pl-[15px] pr-[19px]">
          <Radio />
          <span className={`${label} ml-[6px]`}>纹理字段:</span>
          <DisabledCombo text="YSDM" />
        </div>
      </Group>
      <Group legend="贴图实际大小" className="h-[93px] mt-[21px]">
        <div className="flex items-center pt-[7px] pl-[15px] pr-[19px]">
          <span className={`${label} -mt-[2px]`}>重复模式:</span>
          <Combo className="w-[176px] h-[22px] ml-auto" text="实际大小" pl={5} />
        </div>
        <div className="flex items-center mt-[6px] pl-[15px]">
          <span className={`${label} w-[81px]`}>横向大小:</span>
          <Spin className="w-[152px]" text="1" />
          <span className={`${label} ml-[13px]`}>米</span>
        </div>
        <div className="flex items-center mt-[9px] pl-[15px]">
          <span className={`${label} w-[81px]`}>纵向大小:</span>
          <Spin className="w-[152px]" text="1" />
          <span className={`${label} ml-[13px]`}>米</span>
        </div>
      </Group>
      <div className="flex justify-end gap-[6px] mt-[6px]">
        <Btn w={64}>确定</Btn>
        <Btn w={64}>关闭</Btn>
      </div>
      <Grip />
    </div>
  );
}

function Annotations() {
  return (
    <>
      <div className="absolute left-[-1px] top-[32px] w-[85px] h-[105px] border border-[#ee3a3a] pointer-events-none" />
      <div className="absolute left-[1179px] top-[370px] w-[320px] h-[33px] border border-[#ee3a3a] pointer-events-none" />
      <svg className="absolute left-0 top-0 pointer-events-none" width="900" height="420" viewBox="0 0 900 420">
        <polygon points="122,126 770,390 774,382 787,401 764,404 767,397 121.500,127" fill="#ef3d3d" />
      </svg>
    </>
  );
}

export default function App() {
  return (
    <div className="relative w-screen h-screen overflow-hidden bg-[#f0f0f0] font-['Roboto','Noto_Sans_CJK_SC',sans-serif]">
      <TopBar />
      <Ribbon />
      <div className="flex h-[735px]">
        <div className="flex flex-col w-[331px] ml-[3px] mr-[6px] mt-[2px] gap-[6px] shrink-0">
          <WorkspacePanel />
          <LayerPanel />
        </div>
        <CenterPanel />
        <TilePanel />
        <DirectoryPanel />
      </div>
      <ExtrudeDialog />
      <MaterialDialog />
      <Annotations />
    </div>
  );
}
